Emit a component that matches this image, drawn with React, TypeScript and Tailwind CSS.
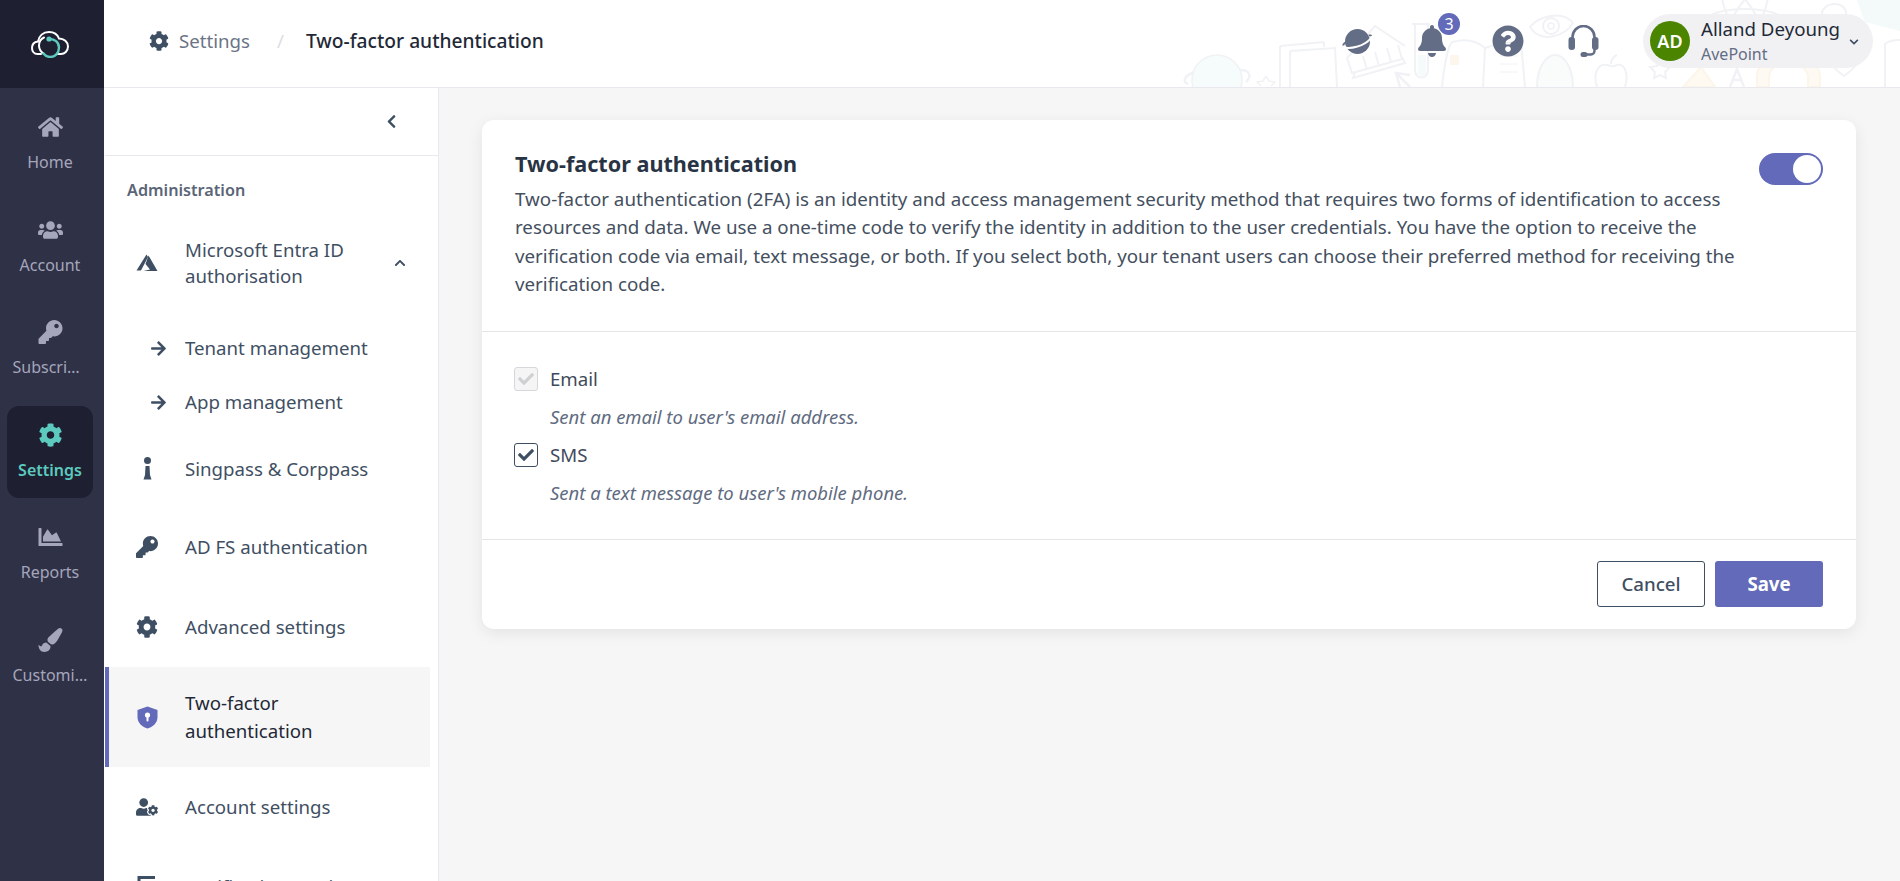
import React from "react";
import { FaHome, FaUsers, FaKey, FaCog, FaChartArea, FaPaintBrush, FaArrowRight, FaUserCog, FaBell, FaQuestionCircle, FaChevronLeft, FaChevronUp, FaChevronDown, FaCheck } from "react-icons/fa";

const rail = [
  { label: "Home", Icon: FaHome },
  { label: "Account", Icon: FaUsers },
  { label: "Subscriptions", Icon: FaKey },
  { label: "Settings", Icon: FaCog, active: true },
  { label: "Reports", Icon: FaChartArea },
  { label: "Customization", Icon: FaPaintBrush },
];

function Logo() {
  return (
    <svg width="38" height="27" viewBox="0 0 38 27" fill="none" strokeWidth="2" strokeLinecap="round">
      <path d="M10 23H6.500C3 23 1 20 1 17C1 13.500 3.500 11 7 10.500C8 5 12 1 18 1C23 1 26.500 3.500 28 7.500C33 7.500 37 11 37 15.500C37 20 33.500 23 30 23H26" stroke="#fff" />
      <path d="M13 6.500C9.500 8 8 11 8 14.500C8 18 10 21 13 23" stroke="#fff" />
      <path d="M18 8C23.500 7.500 28 11.500 28 16.500C28 22 24 26 19.500 26C16.500 26 14 24.500 12.500 22.500" stroke="#5ccabf" strokeWidth="2.400" />
      <circle cx="18" cy="8" r="2.600" fill="#5ccabf" />
    </svg>
  );
}

function Planet({ className }: { className?: string }) {
  return (
    <svg className={className} viewBox="0 0 30 25">
      <circle cx="15.500" cy="12.500" r="12.500" fill="currentColor" />
      <path d="M0.800 17.800C7 20.500 22 18 29.300 8.800" fill="none" stroke="#fff" strokeWidth="2" />
      <path d="M3.500 12.500C1 14 0 15.500 0.500 16.800L2.500 16.200C2.300 15.800 3 15 4 14.300zM26.500 5.500C28.800 5.200 30 5.700 30 6.800L28 7.500C27.800 7.200 27.500 7.200 27 7.300z" fill="currentColor" />
    </svg>
  );
}

function Headphones({ className }: { className?: string }) {
  return (
    <svg className={className} viewBox="0 0 31 32" fill="none">
      <path d="M4.500 13V12A11 11 0 0 1 26.500 12V13" stroke="currentColor" strokeWidth="2.600" />
      <rect x="0.500" y="12" width="6.500" height="13" rx="3" fill="currentColor" />
      <rect x="24" y="12" width="6.500" height="13" rx="3" fill="currentColor" />
      <path d="M26.500 24V26A3.500 3.500 0 0 1 23 29.500H17" stroke="currentColor" strokeWidth="2.400" />
      <rect x="12.500" y="27" width="7" height="5" rx="2.500" fill="currentColor" />
    </svg>
  );
}

function Azure() {
  return (
    <svg width="22" height="18" viewBox="0 0 22 18" fill="#3f4f63">
      <path d="M10.500 0.500L0.500 16.500L5 16.500L12 3z" />
      <path d="M12.500 1.500L21.500 17H7.500L14 15.500L9.500 10z" />
    </svg>
  );
}

function InfoMark() {
  return (
    <svg width="9" height="23" viewBox="0 0 9 23" fill="#3f4f63">
      <circle cx="4.500" cy="3.500" r="3.500" />
      <path d="M2.500 9H6.500L7 18L8.500 22.500H0.500L2 18z" />
    </svg>
  );
}

function Shield() {
  return (
    <svg width="21" height="23" viewBox="0 0 21 23">
      <path d="M10.500 0.500L20.500 4V11c0 5.500-4 9.800-10 11.500C4.500 20.800.5 16.500.5 11V4z" fill="#626ab9" />
      <circle cx="10.500" cy="9" r="2.600" fill="#fff" />
      <rect x="9.500" y="10" width="2" height="5.500" rx="0.800" fill="#fff" />
    </svg>
  );
}

function NotifIcon() {
  return (
    <svg width="20" height="22" viewBox="0 0 20 22" fill="none" stroke="#3f4f63" strokeWidth="3">
      <path d="M2 21V1.500H18" />
      <path d="M6 8H16M6 13H16" strokeWidth="2" />
    </svg>
  );
}

function Doodles() {
  return (
    <svg className="absolute right-0 top-0 h-[87px] w-[720px]" viewBox="1180 0 720 87" fill="none" stroke="#f1f2f5" strokeWidth="1.500">
      <circle cx="1217" cy="80" r="25" fill="#f6fbfb" />
      <path d="M1194 72c-10 4-12 10-6 12M1240 70c10 0 12 6 6 12" strokeWidth="2.500" />
      <path d="M1266 76l3 5 6 1-4 4M1266 76l-3 5-6 1 4 4" />
      <path d="M1280 46l44-4M1280 46v41M1324 42v5M1290 51l45-3 2 39M1290 51v36" strokeWidth="2" />
      <path d="M1347 58l28-32 30 20M1347 58l5 15 50-14-4-14M1355 72l-2 6 52-15-3-6M1363 56l4 14M1375 52l4 14M1387 48l4 14" strokeWidth="2" />
      <path d="M1400 87l-4-14 14 2M1396 73l14 14" strokeWidth="2.500" />
      <path d="M1412 24h18M1415 24v46c0 10 13 10 13 0v-46" strokeWidth="2" />
      <path d="M1418 55h8v18c0 4-8 4-8 0z" fill="#f4fbfa" stroke="none" />
      <path d="M1442 87c2-20 6-42 10-45 14-4 24-2 33 6 10-4 24-6 36-6l4 45M1485 48l-2 39" strokeWidth="2" />
      <rect x="1450" y="55" width="9" height="10" fill="#fcf6ec" stroke="none" />
      <path d="M1500 56h18M1500 64h18M1500 72h18" strokeWidth="1" />
      <path d="M1530 27c8-10 32-18 43-4-6 12-32 22-43 4z" strokeWidth="2" />
      <circle cx="1551" cy="26" r="8" strokeWidth="2" />
      <circle cx="1551" cy="26" r="3" />
      <path d="M1537 87c0-18 8-32 18-32s18 14 18 32" fill="#f9fcfb" strokeWidth="2" />
      <path d="M1597 87c-4-12 0-24 10-22 8 2 4 2 10 0 8-2 12 10 8 22M1611 64c0-4 2-7 6-9" strokeWidth="2" />
      <path d="M1660 60l3 6 7 1-5 5 1 6-6-3-6 3 1-6-5-5 7-1z" strokeWidth="2" />
      <path d="M1683 87l18-20 14 20z" fill="#fefaf2" stroke="#fcf5e9" strokeWidth="2" />
      <path d="M1730 87l7-18 7 18M1733 80h8" strokeWidth="2.500" />
      <path d="M1757 87v-10c0-14 14-23 31-23s32 9 32 23v10h-12v-10c0-8-9-13-20-13s-19 5-19 13v10z" fill="#fefaf3" stroke="#fcf5e9" strokeWidth="2" />
      <ellipse cx="1745" cy="22" rx="40" ry="13" strokeWidth="2" />
      <ellipse cx="1745" cy="22" rx="40" ry="13" strokeWidth="2" transform="rotate(60 1745 22)" />
      <ellipse cx="1745" cy="22" rx="40" ry="13" strokeWidth="2" transform="rotate(120 1745 22)" />
      <path d="M1822 14c0-12 22-14 24-2 2 10-12 10-14 22l-2 14" strokeWidth="2" />
      <path d="M1844 76c-8-6-18-14-15-24 3-7 12-6 15 1 3-7 12-8 15-1 3 10-7 18-15 24z" strokeWidth="2" />
      <path d="M1885 87V44c4-4 10-4 15-4" strokeWidth="2" />
      <path d="M1857 0l8 22 35 9V0z" fill="#f3faf9" stroke="none" />
    </svg>
  );
}

function NavRow({ h, Icon, children }: { h: string; Icon: React.ReactNode; children: React.ReactNode }) {
  return (
    <div className={`flex items-center ${h} pl-[31px] pr-6`}>
      <span className="flex w-[22px] justify-center">{Icon}</span>
      <span className="ml-[27px] text-[18.670px] leading-[26px] text-[#3f4f63]">{children}</span>
    </div>
  );
}

function Check({ disabled, label, note }: { disabled?: boolean; label: string; note: string }) {
  return (
    <div>
      <div className="flex h-[24px] items-center">
        <span className={`flex h-[24px] w-[24px] items-center justify-center rounded-[3px] border ${disabled ? "border-[#d5d7da] bg-[#f5f5f5]" : "border-[#3f4f63] bg-white"}`}>
          <FaCheck className={`h-[16px] w-[16px] ${disabled ? "text-[#ced0d2]" : "text-[#3f4f63]"}`} />
        </span>
        <span className="ml-[12px] text-[18.670px] text-[#3f4a5c]">{label}</span>
      </div>
      <div className="ml-[36px] mt-[14px] h-[24px] text-[18.480px] leading-[24px] italic text-[#5f6b80]">{note}</div>
    </div>
  );
}

export default function App() {
  return (
    <div className="flex h-[881px] w-[1900px] overflow-hidden bg-[#f6f6f6] font-['Noto_Sans',sans-serif]">
      <aside className="flex w-[104px] shrink-0 flex-col bg-[#2f3147]">
        <div className="flex h-[88px] shrink-0 items-center bg-[#1e2031] pl-[31px]">
          <Logo />
        </div>
        <div className="flex flex-col gap-[10.600px] pl-[7px] pr-[11px] pt-[10px]">
          {rail.map(({ label, Icon, active }) => (
            <div key={label} className={`flex h-[92px] flex-col items-center rounded-[12px] pt-[17px] ${active ? "bg-[#1e2031]" : ""}`}>
              <Icon className={`h-[24px] w-[25px] ${active ? "text-[#5ccabf]" : "text-[#a5a6bb]"}`} />
              <span className={`mt-[11px] w-[75px] truncate text-center text-[16px] leading-[24px] ${active ? "font-semibold text-[#5ccabf]" : "text-[#a5a6bb]"}`}>{label}</span>
            </div>
          ))}
        </div>
      </aside>
      <div className="flex min-w-0 flex-1 flex-col">
        <header className="relative flex h-[88px] shrink-0 items-center border-b border-[#e8e8ee] bg-white pb-[5px]">
          <Doodles />
          <div className="relative flex items-center pl-[45px] text-[18.670px]">
            <FaCog className="h-[20px] w-[20px] text-[#3f4f63]" />
            <span className="ml-[10px] text-[#6b7486]">Settings</span>
            <span className="ml-[27px] text-[#dcdee2]">/</span>
            <span className="ml-[22px] text-[19.200px] font-medium text-[#1f2937]">Two-factor authentication</span>
          </div>
          <div className="relative ml-auto flex items-center pr-[27px]">
            <Planet className="h-[25px] w-[30px] text-[#636d85]" />
            <span className="relative ml-[45px] flex w-[30px] justify-center">
              <FaBell className="h-[32px] w-[28px] text-[#636d85]" />
              <span className="absolute left-[21px] top-[-12px] flex h-[22px] w-[22px] items-center justify-center rounded-full bg-[#626ab9] text-[16px] leading-none text-white">3</span>
            </span>
            <FaQuestionCircle className="ml-[45px] h-[32px] w-[32px] text-[#636d85]" />
            <Headphones className="ml-[44px] h-[32px] w-[31px] text-[#636d85]" />
            <div className="ml-[44px] flex h-[54px] w-[230px] items-center rounded-[27px] bg-[#f1f1f4] pl-[7px]">
              <span className="flex h-[40px] w-[40px] shrink-0 items-center justify-center rounded-full bg-[#4b8500] text-[18px] font-semibold text-white">AD</span>
              <div className="ml-[11px] flex flex-col">
                <span className="text-[18.670px] leading-[26px] text-[#1f2937]">Alland Deyoung</span>
                <span className="text-[16px] leading-[24px] text-[#636d85]">AvePoint</span>
              </div>
              <FaChevronDown className="ml-[9px] mt-[2px] h-[10px] w-[10px] shrink-0 text-[#3f4f63]" />
            </div>
          </div>
        </header>
        <div className="flex min-h-0 flex-1">
          <nav className="flex w-[335px] shrink-0 flex-col border-r border-[#e8e8ee] bg-white pl-[1px]">
            <div className="flex h-[68px] shrink-0 items-center justify-end border-b border-[#e8e8ee] pr-[39px]">
              <FaChevronLeft className="h-[15px] w-[15px] text-[#3f4f63]" />
            </div>
            <div className="shrink-0 pl-[22px] pt-[22px] text-[16.200px] font-semibold leading-[24px] text-[#5a6577]">Administration</div>
            <div className="mt-[9px] flex h-[104px] shrink-0 items-center pl-[31px] pr-[32px]">
              <span className="flex w-[22px] justify-center"><Azure /></span>
              <span className="ml-[27px] text-[18.670px] leading-[26px] text-[#3f4f63]">Microsoft Entra ID<br />authorisation</span>
              <FaChevronUp className="ml-auto h-[12px] w-[12px] text-[#3f4f63]" />
            </div>
            <div className="mt-[6px]">
              <div className="flex h-[54px] items-center pl-[45px]"><FaArrowRight className="h-[17px] w-[17px] text-[#3f4f63]" /><span className="ml-[18px] text-[18.670px] text-[#3f4f63]">Tenant management</span></div>
              <div className="flex h-[54px] items-center pl-[45px]"><FaArrowRight className="h-[17px] w-[17px] text-[#3f4f63]" /><span className="ml-[18px] text-[18.670px] text-[#3f4f63]">App management</span></div>
            </div>
            <NavRow h="h-[79px] shrink-0" Icon={<InfoMark />}>Singpass &amp; Corppass</NavRow>
            <NavRow h="h-[78px] shrink-0" Icon={<FaKey className="h-[22px] w-[22px] text-[#3f4f63]" />}>AD FS authentication</NavRow>
            <NavRow h="h-[81px] shrink-0" Icon={<FaCog className="h-[22px] w-[22px] text-[#3f4f63]" />}>Advanced settings</NavRow>
            <div className="flex h-[100px] w-[325px] shrink-0 items-center border-l-4 border-[#626ab9] bg-[#f6f6f6] pl-[27px]">
              <span className="flex w-[22px] justify-center"><Shield /></span>
              <span className="ml-[27px] text-[18.670px] leading-[28px] text-[#1f2937]">Two-factor<br />authentication</span>
            </div>
            <NavRow h="h-[80px] shrink-0" Icon={<FaUserCog className="h-[22px] w-[22px] text-[#3f4f63]" />}>Account settings</NavRow>
            <NavRow h="h-[80px] shrink-0" Icon={<NotifIcon />}>Notification services</NavRow>
          </nav>
          <main className="min-w-0 flex-1 pl-[43px] pr-[44px] pt-[32px]">
            <section className="h-[509px] rounded-[12px] bg-white shadow-[0_4px_16px_rgba(0,0,0,0.08)]">
              <div className="flex h-[212px] border-b border-[#e6e6e6] pl-[33px] pr-[33px] pt-[30px]">
                <div className="w-[1225px]">
                  <h2 className="text-[21.600px] font-bold leading-[28px] text-[#283444]">Two-factor authentication</h2>
                  <p className="mt-[7px] text-[18.750px] leading-[28.330px] text-[#444f60]">
                    Two-factor authentication (2FA) is an identity and access management security method that requires two forms of identification to access resources and data. We use a one-time code to verify the identity in addition to the user credentials. You have the option to receive the verification code via email, text message, or both. If you select both, your tenant users can choose their preferred method for receiving the verification code.
                  </p>
                </div>
                <div className="ml-auto mt-[3px] flex h-[32px] w-[64px] shrink-0 items-center justify-end rounded-full bg-[#626ab9] pr-[2px]">
                  <span className="h-[28px] w-[28px] rounded-full bg-white" />
                </div>
              </div>
              <div className="flex h-[208px] flex-col gap-[14px] border-b border-[#e6e6e6] pl-[32px] pt-[35px]">
                <Check disabled label="Email" note="Sent an email to user's email address." />
                <Check label="SMS" note="Sent a text message to user's mobile phone." />
              </div>
              <div className="flex justify-end gap-[10px] pr-[33px] pt-[21px]">
                <button className="h-[46px] w-[108px] rounded-[3px] border border-[#3f4f63] bg-white text-[18.670px] font-medium text-[#3f4f63]">Cancel</button>
                <button className="h-[46px] w-[108px] rounded-[3px] bg-[#626ab9] text-[18.670px] font-bold text-white">Save</button>
              </div>
            </section>
          </main>
        </div>
      </div>
    </div>
  );
}
